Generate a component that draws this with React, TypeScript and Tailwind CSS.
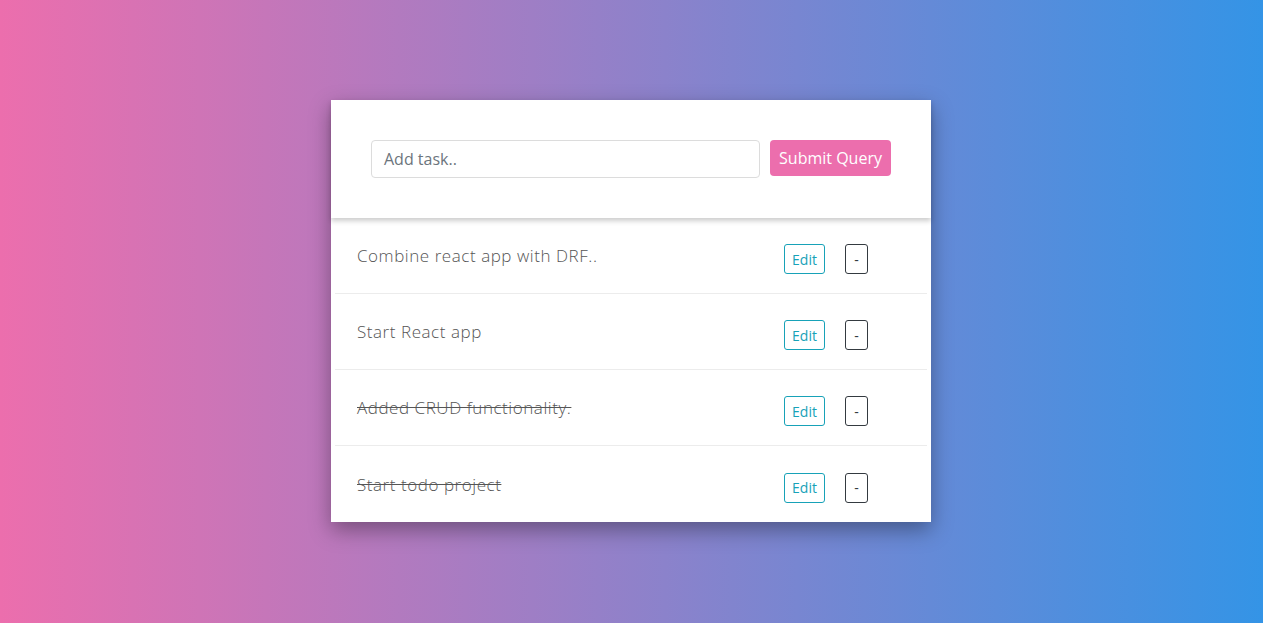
import React from "react";

const tasks = [
  { title: "Combine react app with DRF..", done: false },
  { title: "Start React app", done: false },
  { title: "Added CRUD functionality.", done: true },
  { title: "Start todo project", done: true },
];

export default function App() {
  return (
    <div className="w-full h-[623px] bg-[linear-gradient(to_right,#ec6ead,#3494e6)] flex justify-center pt-[100px] pr-[1px]" style={{ fontFamily: '"Open Sans", sans-serif' }}>
      <div className="w-[600px] h-[422px] bg-white shadow-[0_8px_20px_rgba(0,0,0,0.35)] flex flex-col">
        <div className="h-[118px] flex items-center px-[40px] gap-[10px] shadow-[0_3px_5px_rgba(0,0,0,0.2)] relative z-10">
          <div className="w-[389px] h-[38px] border border-[#dcdcdc] rounded-[4px] flex items-center px-[12px] text-[16px] text-[#6c757d]">
            Add task..
          </div>
          <button className="w-[121px] h-[36px] -mt-[2px] bg-[#ec6ead] rounded-[4px] text-white text-[16px] flex items-center justify-center">
            Submit Query
          </button>
        </div>
        <div className="flex flex-col px-[4px]">
          {tasks.map((t, i) => (
            <div key={i} className={`h-[76px] flex items-center pl-[22px] ${i < tasks.length - 1 ? "border-b border-[#ececec]" : ""}`}>
              <span
                className={`flex-1 text-[17px] font-light text-[#555] mt-[1px] ${t.done ? "line-through" : ""}`}
                style={{ fontFamily: '"Open Sans", sans-serif', letterSpacing: "0.55px" }}
              >
                {t.title}
              </span>
              <button className="w-[41px] h-[30px] mt-[7px] border border-[#17a2b8] rounded-[3px] text-[#17a2b8] text-[14px] flex items-center justify-center">
                Edit
              </button>
              <button className="w-[23px] h-[30px] mt-[7px] ml-[20px] mr-[59px] border border-[#343a40] rounded-[3px] text-[#343a40] text-[14px] flex items-center justify-center">
                -
              </button>
            </div>
          ))}
        </div>
      </div>
    </div>
  );
}
